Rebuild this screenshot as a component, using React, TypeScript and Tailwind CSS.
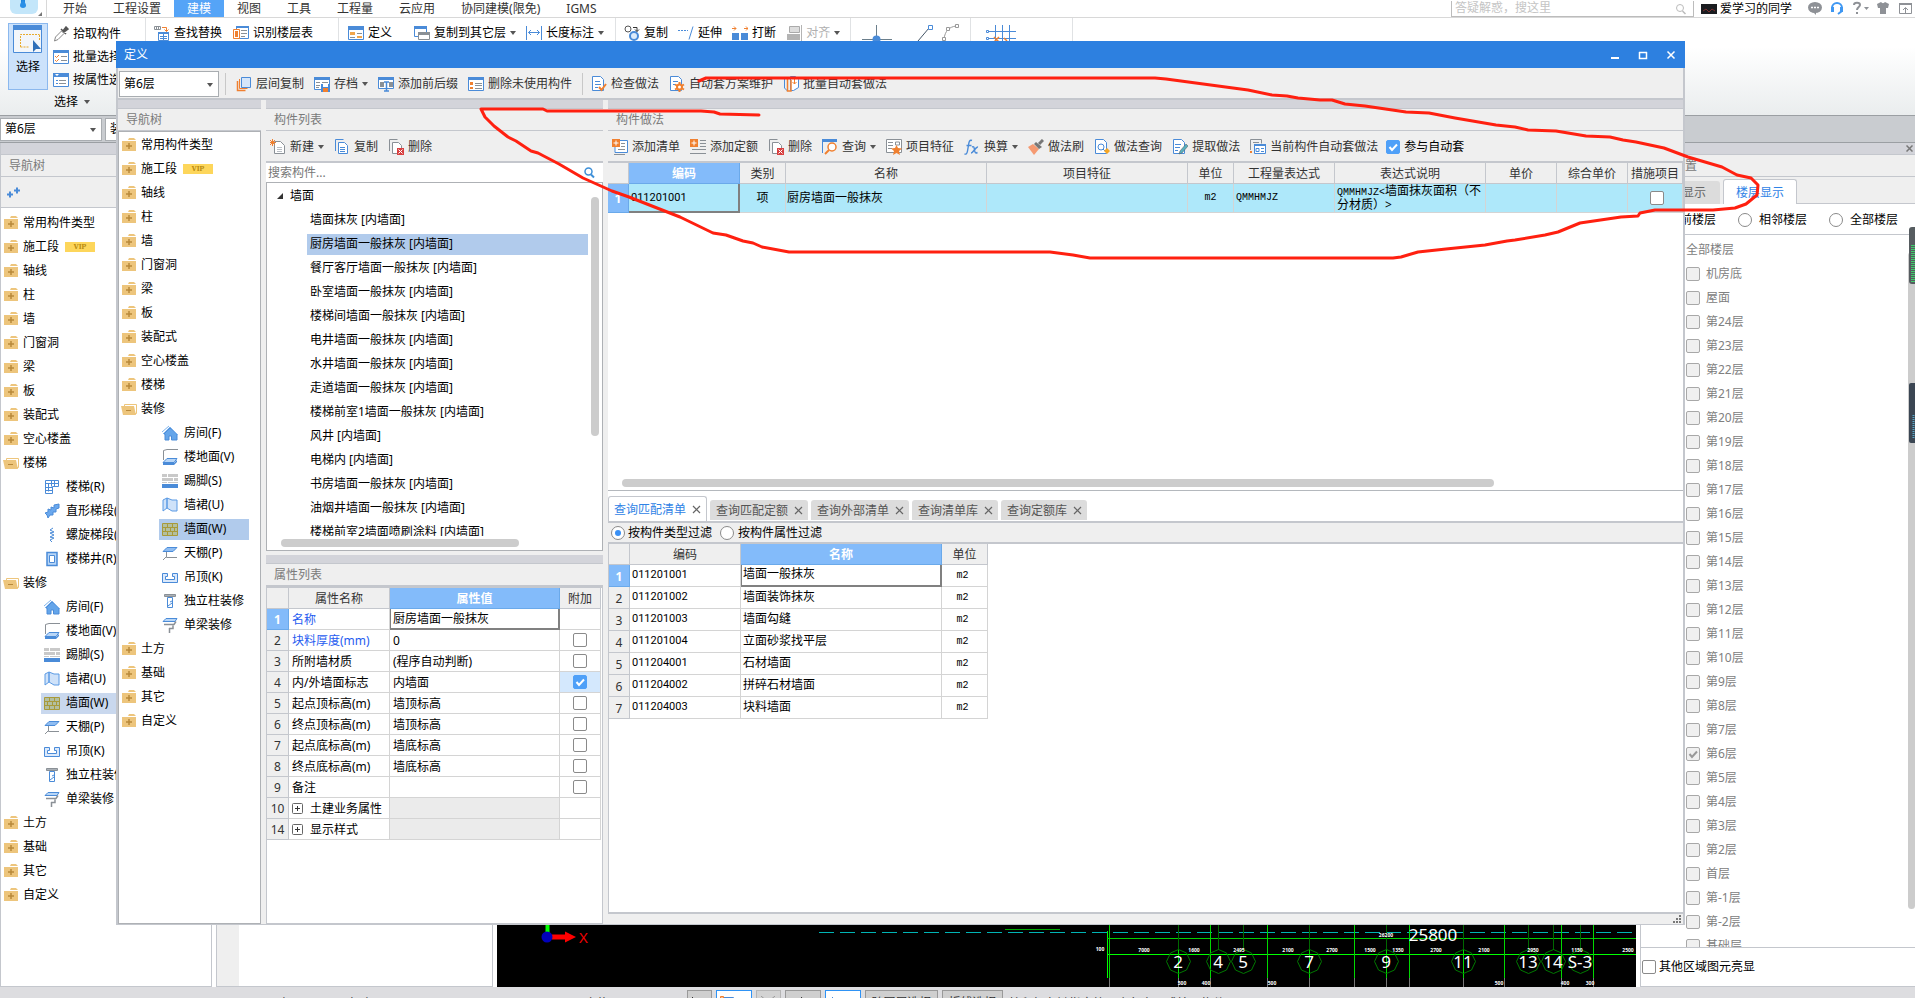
import type { ReactNode } from "react";
import clsx from "clsx";

const B = "#4a8bd8";
const G = "#8a9096";
const O = "#f08030";

const ICONS: Record<string, ReactNode> = {
  dropper: (
    <>
      <path d="M1.500 15l1-4 6-6 2.500 2.500-6 6z" fill="#fff" stroke="#888" />
      <path d="M8 3l5 5M10 5l3-4 2 2-4 3z" stroke="#555" strokeWidth="1.500" fill="#555" />
    </>
  ),
  checklist: (
    <>
      <path d="M.5 1.500h15v13h-15z" fill="#fff" stroke={B} />
      <path d="M0 1h16v3H0z" fill={B} />
      <path d="M2 7l1.500 1.500L6 6M2 11l1.500 1.500L6 10" stroke={O} fill="none" />
      <path d="M8 7.500h6M8 11.500h6" stroke={G} />
    </>
  ),
  proplist: (
    <>
      <path d="M.5 1.500h15v13h-15z" fill="#fff" stroke={B} />
      <path d="M0 1h16v4H0z" fill={B} />
      <path d="M3 8.500h2M3 11.500h2" stroke={B} />
      <path d="M6 8.500h7M6 11.500h7" stroke={G} />
      <path d="M2 2h4L4 4z" fill="#fff" />
    </>
  ),
  replace: (
    <>
      <path d="M.5 1.500h6v3h-6zM2.500 1.500v3M4.500 1.500v3" fill="none" stroke={G} />
      <path d="M8 2.500h4.500v4M10.500 4.500l2 2 2-2" fill="none" stroke={O} />
      <path d="M4.500 7.500h10v8h-10z" fill="#fff" stroke={B} />
      <path d="M4 7h11v2H4z" fill={B} />
      <path d="M6 11.500h7M6 13.500h7M9.500 9v6" stroke={B} />
    </>
  ),
  floors: (
    <>
      <path d="M3.500 1.500h12v12h-12z" fill="#fff" stroke={B} />
      <path d="M3 1h13v2H3z" fill={B} />
      <path d="M.5 4.500h6v9h-6z" fill="#fff" stroke={O} />
      <path d="M2 6h3v6H2z" fill={O} />
      <path d="M8 5.500h6M8 8.500h6M8 11.500h4" stroke={G} />
    </>
  ),
  define: (
    <>
      <path d="M.5 1.500h15v13h-15z" fill="#fff" stroke={B} />
      <path d="M0 1h16v4H0z" fill={B} />
      <path d="M2 7h5v3H2zM9 11h5v2H9z" fill="#f3a64a" />
      <path d="M9 8.500h5M2 12.500h5" stroke={G} />
    </>
  ),
  layers: (
    <>
      <path d="M.5 1.500h12v10H.5z" fill="#fff" stroke={B} />
      <path d="M0 1h13v3H0z" fill={B} />
      <path d="M4.500 7.500h11v7h-11z" fill="#fff" stroke={G} />
      <path d="M4 7h12v3H4z" fill={G} />
    </>
  ),
  measure: <path d="M.5 1v14M15.500 1v14M2.500 7.500h11M5 5L2.500 7.500 5 10M11 5l2.500 2.500L11 10" fill="none" stroke={B} />,
  copyball: (
    <>
      <circle cx="4" cy="4" r="3" fill="none" stroke="#555" />
      <circle cx="10" cy="11" r="4" fill="#dcebfb" stroke={B} strokeWidth="2" />
      <path d="M9 2.500h4v4M11 4.500l2 2 2-2" fill="none" stroke="#333" />
    </>
  ),
  extend: (
    <>
      <path d="M0 5.500h10" stroke={B} strokeDasharray="2 1" />
      <path d="M11 14.500l4-13" stroke={B} />
    </>
  ),
  breakup: (
    <>
      <path d="M0 8h7v7H0zM9 8h7v7H9z" fill={B} />
      <path d="M0 3.500h4M2 1.500l2 2-2 2M12 3.500h4M14 1.500l2 2-2 2" stroke={O} fill="none" />
    </>
  ),
  align: (
    <>
      <path d="M3.500 1.500h10v6h-10z" fill="#ddd" stroke="#aaa" />
      <path d="M1 9h13v6H1z" fill="#b4b4b4" />
      <path d="M15.500 0v16" stroke="#b4b4b4" />
    </>
  ),
  bluecopy: (
    <>
      <path d="M1.500 5v9.500h8" fill="none" stroke={O} strokeWidth="1.500" />
      <path d="M3.500 3v9.500h8" fill="none" stroke={O} />
      <path d="M5.500 1.500h9v10h-9z" fill="#d5e6fa" stroke={B} />
    </>
  ),
  archive: (
    <>
      <path d="M.5 1.500h15v12H.5z" fill="#fff" stroke={B} />
      <path d="M0 1h16v3H0z" fill={B} />
      <path d="M2 6.500h4M2 9.500h4M2 11.500h3M8 6.500h6" stroke={G} />
      <path d="M7 8h9v8H7z" fill={B} />
      <path d="M9 8h5v3H9z" fill="#fff" />
      <path d="M9 12h5v4H9z" fill={O} />
    </>
  ),
  affix: (
    <>
      <path d="M.5 1.500h15v11H.5z" fill="#fff" stroke={B} />
      <path d="M0 1h16v3H0z" fill={B} />
      <path d="M2 6h4v5H2zM11 6h4v5h-4z" fill={G} />
      <path d="M6 6h5M8.500 6v9M6 15h5" stroke={B} strokeWidth="1.500" />
    </>
  ),
  listred: (
    <>
      <path d="M.5 1.500h15v13H.5z" fill="#fff" stroke={B} />
      <path d="M0 1h16v3H0z" fill={B} />
      <path d="M2 6h3v3H2zM2 11h3v2H2z" fill={O} />
      <path d="M7 7.500h7M7 9.500h7M7 12.500h7" stroke={G} />
    </>
  ),
  docCheck: (
    <>
      <path d="M1.500.5h8l3 3v11h-11z" fill="#fff" stroke={B} />
      <path d="M4 5.500h5M4 8.500h6M4 11.500h3" stroke={B} />
      <path d="M8 11l2.500 3L15 8" fill="none" stroke={O} strokeWidth="2" />
    </>
  ),
  docGear: (
    <>
      <path d="M1.500.5h8l3 3v11h-11z" fill="#fff" stroke={B} />
      <path d="M4 5.500h5M4 8.500h3" stroke={B} />
      <path d="M10.500 6v10M6 8.500l9 5M6 13.500l9-5" stroke={O} strokeWidth="2" />
      <circle cx="10.500" cy="11" r="2.500" fill="#fff" stroke={O} strokeWidth="2" />
    </>
  ),
  batch: (
    <>
      <path d="M1 1.500h4M1.500 1v11l3 3" fill="none" stroke={B} />
      <path d="M7.500.5h5l3 3v8l-5 3h-3z" fill="#fff" stroke={B} />
      <path d="M4.500 1v14H8V4" fill="none" stroke={O} strokeWidth="1.500" />
      <path d="M11.500 3v5M9.500 6l2 2 2-2" stroke={O} fill="none" />
    </>
  ),
  newdoc: (
    <>
      <path d="M4.500 2.500h6l4 4v8h-10z" fill="#fff" stroke={G} />
      <path d="M7 8.500h5M7 10.500h5M7 12.500h5" stroke="#b9bec4" />
      <path d="M0 1l5 5M5 1L0 6M2.500 0v7M0 3.500h6" stroke={O} />
    </>
  ),
  copy: (
    <>
      <path d="M1.500 12V.5h8" fill="none" stroke={B} />
      <path d="M4.500 3.500h6l3 3v8h-9z" fill="#fff" stroke={B} />
      <path d="M6 8.500h5M6 10.500h5M6 12.500h5" stroke={B} />
    </>
  ),
  remove: (
    <>
      <path d="M1.500 12V.5h8" fill="none" stroke={G} />
      <path d="M4.500 3.500h6l3 3v8h-9z" fill="#fff" stroke={G} />
      <path d="M9 9h7v7H9z" fill="#d84040" />
      <path d="M10.500 10.500l4 4M14.500 10.500l-4 4" stroke="#fff" />
    </>
  ),
  addlist: (
    <>
      <path d="M5 1.500h10.500v12H3V7" fill="#fff" stroke={B} />
      <path d="M2 15.500h11M9 4.500h4M9 7.500h4M6 10.500h7" stroke={G} />
      <path d="M0 0h8v8H0z" fill={O} />
      <path d="M4 1.500v5M1.500 4h5" stroke="#fff" />
    </>
  ),
  addquota: (
    <>
      <path d="M10 1.500h6M10 4.500h6M10 7.500h6M2 10.500h14M0 14.500h16" stroke={G} />
      <path d="M0 0h8v8H0z" fill={O} />
      <path d="M4 1.500v5M1.500 4h5" stroke="#fff" />
    </>
  ),
  query: (
    <>
      <path d="M.5 14V1.500h14" fill="none" stroke={B} />
      <path d="M0 0h15v3H0z" fill={B} />
      <circle cx="10" cy="8" r="4" fill="#fff" stroke={O} strokeWidth="1.500" />
      <path d="M7 11l-4 4" stroke={O} strokeWidth="2" />
    </>
  ),
  feature: (
    <>
      <path d="M.5.5h15v13H.5z" fill="#fff" stroke={G} />
      <path d="M2 3.500h5M2 6.500h5M2 9.500h4M9.500 3h4v3h-4z" stroke={G} fill="none" />
      <path d="M10.500 6l1.500 3 4 .5-3 2.500 1 4-3.500-2L7 16l1-4-3-2.500 4-.5z" fill={O} />
    </>
  ),
  fx: (
    <path
      d="M8 1.500C5.500.5 5 3 4.700 5L3.500 12c-.5 3-1.500 3.500-3 3M2.500 6.500h5M8 8c2-1 2 0 2.500 3s1 3.500 3 2.500M14 8c-2-.5-5 6-7 6"
      fill="none"
      stroke={B}
      strokeWidth="1.400"
    />
  ),
  brush: (
    <>
      <path d="M0 8l5-3 6 5-5 6z" fill="#f59a72" />
      <path d="M6 5l2-2 6 5-3 2z" fill="#777" />
      <path d="M11 5l4-4" stroke="#777" strokeWidth="3" />
    </>
  ),
  docFind: (
    <>
      <path d="M1.500.5h8l3 3v11h-11z" fill="#fff" stroke={B} />
      <circle cx="7" cy="8" r="3" fill="#fff" stroke={B} />
      <path d="M9 10l3 3" stroke={B} />
      <path d="M13 9l3 3-3 3-3-3z" fill="#f5a623" />
    </>
  ),
  docPen: (
    <>
      <path d="M1.500.5h8l3 3v11h-11z" fill="#fff" stroke={B} />
      <path d="M3 5.500h6M3 8.500h5M3 11.500h3" stroke={B} />
      <path d="M7 15l1-3 6-7 2 2-6 7z" fill="#58b0c0" stroke="#555" strokeWidth=".5" />
    </>
  ),
  current: (
    <>
      <path d="M.5 11V.5h11v4M3 3.500h6" fill="none" stroke={G} />
      <path d="M4.500 5.500h11v9h-11z" fill="#fff" stroke={B} />
      <path d="M4 5h12v2H4z" fill={B} />
      <path d="M6 9.500h3v3H6zM11 9.500h3M11 12.500h3" fill="none" stroke={B} />
      <path d="M0 13h2" stroke={O} strokeWidth="2" />
    </>
  ),
  house: (
    <>
      <path d="M2 9l6-6 7 6v6H9.500v-4H7v4H3V9z" fill="#64a5ea" stroke={B} />
      <path d="M0 7l7-6M1 9l7-7 8 8" fill="none" stroke="#7fb3ec" />
    </>
  ),
  slab: (
    <>
      <path d="M1.500 11V1.500L5 .5h11" fill="none" stroke={G} />
      <path d="M1 13.500l4-4h10l-3 4z" fill="#b8d6f7" stroke={B} />
      <path d="M1 14h11l3-3v2l-3 3H1z" fill={B} />
    </>
  ),
  skirt: (
    <>
      <path d="M0 1h16v9H0z" fill="#c9c9c9" />
      <path d="M0 4.500h16M0 8.500h16M5.500 1v3M11.500 5v3M5.500 9v2" stroke="#fff" />
      <path d="M0 11h16v4H0z" fill={B} />
    </>
  ),
  dado: <path d="M1 3l4-2v10l-4 3zM5 1l5 2h5v11h-5l-5-3z" fill="#cfe2f9" stroke="#5b9ae4" strokeLinejoin="round" />,
  brick: (
    <path
      d="M.5 2.500h15v12H.5zM.5 6.500h15M.5 10.500h15M5.500 2.500v4M10.500 2.500v4M3.500 6.500v4M8.500 6.500v4M12.500 6.500v4M5.500 10.500v4M10.500 10.500v4"
      fill="#b3bfa0"
      stroke="#a89a3a"
    />
  ),
  ceiling: (
    <>
      <path d="M1 6.500l4-4h10l-4 4z" fill="#8fbdf2" stroke={B} />
      <path d="M4.500 7v5.500H15M4 12l-3 3" fill="none" stroke={G} />
    </>
  ),
  hung: <path d="M.5 4.500h5v3h-2v3h9v-3h-2v-3h5v9H.5z" fill="#dbe9fb" stroke={B} />,
  column: (
    <>
      <path d="M2.500 1.500h11v2h-11z" fill="#aab0b6" stroke={G} />
      <path d="M5.500 4.500h5v10h-5z" fill="#fff" stroke={B} />
      <path d="M6 13l4-3M8 9l2-1" stroke={B} />
    </>
  ),
  beam: (
    <>
      <path d="M1 4.500l3-3h11l-2 3z" fill="#b8d6f7" stroke={B} />
      <path d="M2 7.500h10l2-3M7 11.500h4v-3M7.500 11v5" fill="none" stroke={G} strokeWidth="1.500" />
    </>
  ),
  stairs: (
    <>
      <path d="M1.500 1.500h13v6h-6v7h-7z" fill="none" stroke={B} />
      <path d="M4.500 4.500v8M7.500 1.500v6M10.500 1.500v6M1.500 4.500h13M1.500 8.500h7M1.500 11.500h7" stroke={B} fill="none" />
    </>
  ),
  flight: <path d="M1 10l3-1V6l3 1V4l3 1V2l5-1v4l-3 1v3H9v3H6l-2 3-1-3z" fill="#6aa8ee" stroke={B} />,
  spiral: <path d="M9 1L6 3l4 2-4 1 4 2-4 2 4 1-4 2 2 2" fill="none" stroke={B} />,
  shaft: (
    <>
      <path d="M3 1.500h10v13H3z" fill="#b8d6f7" stroke={B} strokeWidth="1.500" />
      <path d="M5.500 4.500h5v7h-5z" fill="#fff" stroke={B} />
    </>
  ),
};

function Icon({ name, className }: { name: string; className?: string }) {
  return (
    <svg viewBox="0 0 16 16" className={clsx("h-4 w-4 shrink-0", className)} aria-hidden="true">
      {ICONS[name]}
    </svg>
  );
}

function Caret({ className }: { className?: string }) {
  return (
    <svg viewBox="0 0 6 4" className={clsx("h-1 w-1.5 shrink-0", className)} aria-hidden="true">
      <path d="M0 0h6L3 4z" fill="currentColor" />
    </svg>
  );
}

function Folder({ open }: { open?: boolean }) {
  return (
    <svg viewBox="0 0 16 14" className="h-3.5 w-4 shrink-0" aria-hidden="true">
      {open ? (
        <>
          <path d="M3.500 2.500h12v9h-12z" fill="#fff" stroke="#edc57c" />
          <path d="M0 4h13l2 9H2z" fill="#edc57c" />
          <path d="M5 8.500h5" stroke="#b8893a" />
        </>
      ) : (
        <>
          <path d="M8 0h5l2 2H7zM1 3h14v10H1z" fill="#edc57c" />
          <path d="M5 8h6M8 5v6" stroke="#b8893a" strokeWidth="1.500" />
        </>
      )}
    </svg>
  );
}

function ToolButton({ icon, label, caret, className }: { icon: string; label: string; caret?: boolean; className?: string }) {
  return (
    <button type="button" className={clsx("flex shrink-0 items-center gap-1 whitespace-nowrap", className)}>
      <Icon name={icon} />
      {label}
      {caret && <Caret className="text-[#555]" />}
    </button>
  );
}

function Combo({ id, label, value, className }: { id: string; label: string; value: string; className?: string }) {
  return (
    <div className={clsx("relative shrink-0", className)}>
      <label htmlFor={id} className="sr-only">
        {label}
      </label>
      <select id={id} className="h-full w-full appearance-none border border-[#a9adb1] bg-white px-1 text-black">
        <option>{value}</option>
      </select>
      <Caret className="absolute top-1/2 right-[6px] -mt-px text-[#555]" />
    </div>
  );
}

function Tick({ label, checked, disabled }: { label: string; checked?: boolean; disabled?: boolean }) {
  return (
    <span className="relative inline-block h-3.5 w-3.5 shrink-0 align-middle">
      <input
        type="checkbox"
        aria-label={label}
        defaultChecked={checked}
        disabled={disabled}
        className={clsx(
          "block h-3.5 w-3.5 appearance-none rounded-[2px] border",
          disabled ? "border-[#a8a8a8] bg-[#f0f0f0]" : checked ? "border-[#4fa0f8] bg-[#4fa0f8]" : "border-[#8a8a8a] bg-white",
        )}
      />
      {checked && (
        <svg viewBox="0 0 14 14" className="pointer-events-none absolute inset-0" aria-hidden="true">
          <path d="M3.500 7l2.500 3 5-5.500" fill="none" stroke={disabled ? "#999" : "#fff"} strokeWidth="2" />
        </svg>
      )}
    </span>
  );
}

function Radio({ name, label, checked, className }: { name: string; label: string; checked?: boolean; className?: string }) {
  return (
    <label className={clsx("flex shrink-0 items-center whitespace-nowrap", className)}>
      <span className="relative grid h-3.5 w-3.5 place-items-center">
        <input
          type="radio"
          name={name}
          defaultChecked={checked}
          className="peer h-3.5 w-3.5 appearance-none rounded-full border border-[#8a8a8a] bg-white"
        />
        <span className="absolute hidden h-1.5 w-1.5 rounded-full bg-[#3a90f5] peer-checked:block" />
      </span>
      {label}
    </label>
  );
}

type Node = { label: string; icon?: string; open?: boolean; vip?: boolean; selected?: boolean };

const BASE: Node[] = [
  { label: "常用构件类型" },
  { label: "施工段", vip: true },
  { label: "轴线" },
  { label: "柱" },
  { label: "墙" },
  { label: "门窗洞" },
  { label: "梁" },
  { label: "板" },
  { label: "装配式" },
  { label: "空心楼盖" },
];
const FINISH: Node[] = [
  { label: "装修", open: true },
  { label: "房间(F)", icon: "house" },
  { label: "楼地面(V)", icon: "slab" },
  { label: "踢脚(S)", icon: "skirt" },
  { label: "墙裙(U)", icon: "dado" },
  { label: "墙面(W)", icon: "brick", selected: true },
  { label: "天棚(P)", icon: "ceiling" },
  { label: "吊顶(K)", icon: "hung" },
  { label: "独立柱装修", icon: "column" },
  { label: "单梁装修", icon: "beam" },
  { label: "土方" },
  { label: "基础" },
  { label: "其它" },
  { label: "自定义" },
];
const STAIRS: Node[] = [
  { label: "楼梯", open: true },
  { label: "楼梯(R)", icon: "stairs" },
  { label: "直形梯段(R)", icon: "flight" },
  { label: "螺旋梯段(R)", icon: "spiral" },
  { label: "楼梯井(R)", icon: "shaft" },
];

function NavTree({ nodes, active }: { nodes: Node[]; active?: boolean }) {
  return (
    <ul className="text-black">
      {nodes.map((n) => (
        <li key={n.label} className={clsx("flex h-6 items-center whitespace-nowrap", n.icon ? "pl-10" : "pl-0.5")}>
          {n.icon ? (
            <span
              className={clsx(
                "flex h-[21px] w-[90px] items-center gap-1.5 pl-[3px]",
                n.selected && (active ? "bg-[#b1cbec]" : "bg-[#c9d8ee]"),
              )}
            >
              <Icon name={n.icon} />
              {n.label}
            </span>
          ) : (
            <span className="flex items-center gap-1">
              <Folder open={n.open} />
              {n.label}
              {n.vip && (
                <span className="ml-0.5 w-[30px] bg-[#fdd65b] text-center font-serif text-[8px] leading-[10px] font-bold text-[#b88a10]">
                  VIP
                </span>
              )}
            </span>
          )}
        </li>
      ))}
    </ul>
  );
}

function PanelHead({ title }: { title: string }) {
  return (
    <>
      <div className="h-[9px] shrink-0 border-b border-[#c4c7cd] bg-[#d3d4da]" />
      <h2 className="flex h-[22px] shrink-0 items-center border-b border-[#c4c7cd] bg-[#efefef] pt-px pl-2 text-[#7a7a7a]">{title}</h2>
    </>
  );
}

const TABS = ["开始", "工程设置", "建模", "视图", "工具", "工程量", "云应用", "协同建模(限免)", "IGMS"];

function TopBar() {
  return (
    <header className="flex h-[18px] shrink-0 border-b border-[#d8d8d8] bg-white text-[#333]">
      <div className="relative mr-[3px] w-[47px] border-r border-[#d8d8d8]">
        <svg viewBox="0 0 46 17" className="h-[17px] w-[46px]" aria-hidden="true">
          <rect x="10" y="-12" width="28" height="26" rx="6" fill="#c3e6fa" />
          <path d="M23 -4v8" stroke="#1f86dd" strokeWidth="4" />
          <path d="M23 0c4 4 4 8 0 8s-4-4 0-8z" fill="#2a8fe6" />
          <path d="M42 12v4h-4z" fill="#777" />
        </svg>
      </div>
      <nav className="flex">
        {TABS.map((t) => (
          <a key={t} href="#" className={clsx("flex items-center px-[13px] leading-4", t === "建模" && "bg-[#55a4f7] text-white")}>
            {t}
          </a>
        ))}
      </nav>
      <div className="ml-auto flex items-center">
        <div className="relative h-4 w-[243px] border border-t-0 border-[#bcbcbc]">
          <input
            aria-label="搜索"
            placeholder="答疑解惑，搜这里"
            className="block h-[15px] w-full px-[3px] placeholder:text-[#c4c4c4]"
          />
          <svg viewBox="0 0 12 12" className="absolute top-[2px] right-[6px] h-3 w-3" aria-hidden="true">
            <circle cx="5" cy="5" r="3.500" fill="none" stroke="#bbb" />
            <path d="M7.500 8l3 3" stroke="#bbb" strokeWidth="1.500" />
          </svg>
        </div>
        <svg viewBox="0 0 16 10" className="ml-[7px] h-[10px] w-4" aria-hidden="true">
          <path d="M0 0h16v10H0z" fill="#1a1c20" />
          <path d="M2 7l3-2 3 3 3-3 3 2" stroke="#7a3030" fill="none" />
        </svg>
        <span className="ml-[3px] w-[87px] whitespace-nowrap text-black">爱学习的同学</span>
        <svg viewBox="0 0 108 15" className="h-[15px] w-[108px]" aria-hidden="true">
          <ellipse cx="8" cy="6.500" rx="7" ry="5.500" fill="#8e9196" />
          <path d="M6 11l3 3v-3z" fill="#8e9196" />
          <path d="M4 6.500h2M7 6.500h2M10 6.500h2" stroke="#fff" strokeWidth="1.500" />
          <path d="M25 7a5 5 0 0 1 10 0v3l-4 3" fill="none" stroke="#3f97f2" strokeWidth="2" />
          <path d="M24 6h3v5h-3zM33 6h3v5h-3z" fill="#3f97f2" />
          <path d="M47 4c0-3 6-3 6 0 0 2-3 2-3 5M50 11v2" fill="none" stroke="#8e9196" strokeWidth="2" />
          <path d="M57 6h5l-2.500 3z" fill="#8e9196" />
          <path d="M70 3l4-2c1 1.500 3 1.500 4 0l4 2-1 4h-2v6h-6V7h-2z" fill="#8e9196" />
          <path d="M92.500 2.500h12v10h-12z" fill="none" stroke="#8e9196" />
          <path d="M92 2h13v2H92z" fill="#8e9196" />
          <path d="M98.500 12V7M96 9l2.500-2.500L101 9" stroke="#8e9196" fill="none" />
        </svg>
      </div>
    </header>
  );
}

function Ribbon() {
  return (
    <div className="flex h-[98px] shrink-0 border-b border-[#9b9fa3] bg-linear-to-b from-white from-30% to-[#eaedee] pl-2 text-black">
      <div className="w-[137px] pt-[5px]">
        <div className="flex gap-[5px]">
          <button type="button" className="flex h-[67px] w-10 flex-col items-center gap-1.5 border border-[#8bb8ee] bg-[#cce2fb] pt-px">
            <svg viewBox="0 0 30 28" className="h-7 w-[30px]" aria-hidden="true">
              <path d="M.5.5h28v27H.5z" fill="#f3f6fa" stroke={B} />
              <path d="M0 0h29v5H0z" fill={B} />
              <path d="M7.500 22V9.500h19M7.500 22h9M26.500 10v6" fill="none" stroke="#e8ab2c" strokeDasharray="2 1" />
              <path d="M20 15v12l3-3h5z" fill="#2f6fb8" />
            </svg>
            选择
          </button>
          <div className="flex flex-col items-start gap-[7px] pt-[3px]">
            <ToolButton icon="dropper" label="拾取构件" className="h-4" />
            <ToolButton icon="checklist" label="批量选择" className="h-4" />
            <ToolButton icon="proplist" label="按属性选择" className="h-4" />
          </div>
        </div>
        <div className="flex items-center gap-1.5 pt-1 pl-[46px]">
          选择
          <Caret className="text-[#555]" />
        </div>
      </div>
      <div className="flex h-[75px] items-start gap-[11px] border-l border-[#e0e2e4] pt-[7px] pl-2">
        <ToolButton icon="replace" label="查找替换" className="h-4" />
        <ToolButton icon="floors" label="识别楼层表" className="h-4" />
      </div>
      <div className="ml-[25px] flex h-[75px] items-start gap-[22px] border-l border-[#e0e2e4] pt-[7px] pl-[9px]">
        <ToolButton icon="define" label="定义" className="h-4" />
        <div className="flex gap-[10px]">
          <ToolButton icon="layers" label="复制到其它层" caret className="h-4" />
          <ToolButton icon="measure" label="长度标注" caret className="h-4" />
        </div>
      </div>
      <div className="ml-[11px] flex h-[75px] items-start gap-[10px] border-l border-[#e0e2e4] pt-[7px] pl-2">
        <ToolButton icon="copyball" label="复制" className="h-4" />
        <ToolButton icon="extend" label="延伸" className="h-4" />
        <ToolButton icon="breakup" label="打断" className="h-4" />
        <ToolButton icon="align" label="对齐" caret className="h-4 text-[#b0b0b0]" />
      </div>
      <svg viewBox="0 0 224 75" className="ml-[10px] h-[75px] w-[224px]" aria-hidden="true">
        <path d="M.5 0v75M120.500 0v75M222.500 0v75" stroke="#e0e2e4" />
        <path d="M26.500 7v34M12 21.500h30" stroke="#6b7f8c" />
        <circle cx="26.500" cy="21.500" r="4" fill={B} />
        <path d="M68 23l11-13" stroke="#456" />
        <path d="M78.500 7.500h4v4h-4z" fill="#fff" stroke={B} />
        <path d="M94 21c1-8 5-12 12-13" fill="none" stroke="#999" />
        <path d="M92.500 19.500h3v3h-3zM96.500 9.500h3v3h-3zM105.500 6.500h3v3h-3z" fill="#fff" stroke="#999" />
        <path d="M137 13.500h29M137 20.500h29M145.500 7v16M152.500 7v16M159.500 7v16" stroke={B} />
        <path d="M136.500 12.500h2v2h-2zM136.500 19.500h2v2h-2z" fill="#fff" stroke={B} />
        <path d="M144 19l5 5M149 19l-5 5M154 20l3 3" stroke={O} strokeWidth="1.500" />
      </svg>
    </div>
  );
}

const FLOORS = ["机房底", "屋面", ...Array.from({ length: 23 }, (_, i) => `第${24 - i}层`), "首层", "第-1层", "第-2层", "基础层"];

function FloorPanel() {
  return (
    <aside className="relative flex w-[275px] shrink-0 flex-col border-b border-l border-[#c4c7cd] bg-white">
      <div className="flex h-3 shrink-0 items-center justify-end border-b border-[#c4c7cd] bg-[#d3d4da] pr-0.5">
        <button type="button" aria-label="关闭面板" className="h-[7px] w-[7px]">
          <svg viewBox="0 0 7 7">
            <path d="M.5.5l6 6M6.500.5l-6 6" stroke="#777" strokeWidth="1.500" />
          </svg>
        </button>
      </div>
      <h2 className="flex h-[22px] shrink-0 items-center border-b border-[#c4c7cd] bg-[#efefef] pt-px pl-2 text-[#7a7a7a]">显示设置</h2>
      <div className="flex h-[27px] shrink-0 items-end bg-[#efefef]">
        <button type="button" className="h-[23px] w-[79px] rounded-t-[3px] bg-[#dcdcdc] pr-[14px] text-right text-[#666]">
          图元显示
        </button>
        <button type="button" className="ml-[3px] h-[25px] w-[74px] rounded-t-[3px] border border-b-0 border-[#c4c7cd] bg-white pt-px text-[#2f83e6]">
          楼层显示
        </button>
        <div className="flex-1 self-stretch border-b border-[#c4c7cd]" />
      </div>
      <div className="flex h-[31px] shrink-0 items-center justify-end gap-[22px] border-b border-[#c4c7cd] pt-px pr-[17px] text-black">
        <Radio name="floor" label="当前楼层" className="gap-[7px]" />
        <Radio name="floor" label="相邻楼层" className="gap-[7px]" />
        <Radio name="floor" label="全部楼层" className="gap-[7px]" />
      </div>
      <div className="min-h-0 flex-1 overflow-hidden pt-[3px] pl-[45px] text-[#808080]">
        <div className="flex h-6 items-center">全部楼层</div>
        {FLOORS.map((f) => (
          <label key={f} className="flex h-6 items-center gap-1.5">
            <Tick label={f} disabled checked={f === "第6层"} />
            {f}
          </label>
        ))}
      </div>
      <label className="flex h-[39px] shrink-0 items-center gap-[3px] border-t border-[#c4c7cd] pl-px text-black">
        <Tick label="其他区域图元亮显" />
        其他区域图元亮显
      </label>
      <div className="absolute top-[109px] right-0 h-[657px] w-[7px] rounded bg-[#ccc]" />
      <svg viewBox="0 0 6 216" className="absolute top-[84px] right-0 h-[216px] w-1.5" aria-hidden="true">
        <rect width="12" height="57" rx="3" fill="#565c60" />
        <path d="M4 18v38" stroke="#3fce6c" strokeWidth="4" strokeDasharray="1 1" />
        <rect y="156" width="12" height="60" rx="2" fill="#3b4653" />
        <path d="M4.500 188v24" stroke="#58a7c8" strokeWidth="2" strokeDasharray="1 1" />
      </svg>
    </aside>
  );
}

const AXES: [number, string][] = [
  [1178, "2"],
  [1218, "4"],
  [1243, "5"],
  [1309, "7"],
  [1386, "9"],
  [1463, "11"],
  [1528, "13"],
  [1553, "14"],
  [1580, "S-3"],
];
const SPANS: [number, string][] = [
  [1144, "7000"],
  [1194, "1600"],
  [1239, "2495"],
  [1288, "2100"],
  [1332, "2700"],
  [1370, "1500"],
  [1398, "1350"],
  [1436, "2700"],
  [1484, "2100"],
  [1533, "2950"],
  [1577, "1150"],
  [1628, "2500"],
];
const OFFSETS: [number, string][] = [
  [1182, "500"],
  [1206, "400"],
  [1272, "500"],
  [1499, "500"],
  [1565, "400"],
  [1590, "300"],
];
const GRID_X = [1109, 1178, 1210, 1267, 1309, 1354, 1386, 1409, 1463, 1504, 1561, 1593];

function DrawingCanvas() {
  return (
    <div className="mr-0 flex min-w-0 flex-1 items-end overflow-hidden bg-black">
      <svg viewBox="497 925 1139 62" className="h-[62px] w-[1139px] shrink-0 font-['Noto_Sans']">
        <path d="M547.500 920v14" stroke="#0f0" strokeWidth="4" />
        <path d="M552 937h14" stroke="red" strokeWidth="5" />
        <path d="M565 931.500v11l11-5.500z" fill="red" />
        <circle cx="547" cy="937" r="5.500" fill="#00b" />
        <text x="579" y="943" fontSize="15" fill="#e00">X</text>
        <path d="M819 932.500h817" stroke="#00b4b4" strokeDasharray="15 6" />
        <path d="M1005 929.500h55" stroke="#00a800" />
        <path d="M1107.500 931v47" stroke="#0f0" />
        <path d="M1107 938.500h529" stroke="#00d000" />
        <path d="M1107 954.500h529" stroke="#0f0" />
        {GRID_X.map((x) => (
          <g key={x}>
            <path d={`M${x + 0.5} 925v53`} stroke="#00d800" />
            <path d={`M${x + 0.5} 978v9`} stroke="#777" />
          </g>
        ))}
        {AXES.map(([x, t]) => (
          <g key={t}>
            <path d={`M${x + 0.5} 925v25`} stroke="#006800" />
            <path d={`M${x + 0.5} 949.500l8 3.500 4 8.500-4 8.500-8 3.500-8-3.500-4-8.500 4-8.500z`} fill="none" stroke="#007800" />
            <text x={x} y="968" fontSize="17" textAnchor="middle" fill="#fff">{t}</text>
          </g>
        ))}
        <text x="1433" y="941" fontSize="17" textAnchor="middle" fill="#fff">25800</text>
        <g fontSize="5" fontWeight="bold" textAnchor="middle" fill="#fff">
          <text x="1386" y="937">26200</text>
          <text x="1100" y="951">100</text>
          {SPANS.map(([x, t]) => (
            <text key={x} x={x} y="952">{t}</text>
          ))}
          {OFFSETS.map(([x, t]) => (
            <text key={x} x={x} y="985">{t}</text>
          ))}
        </g>
      </svg>
    </div>
  );
}

function StatusBar() {
  return (
    <footer className="relative flex h-[11px] shrink-0 items-start overflow-hidden bg-[#dddde0] pt-[3px] pl-[266px] text-[#333]">
      <span className="w-[83px] pt-1.5">层高: 3</span>
      <span className="w-[235px] pt-1.5">标高: 15</span>
      <span className="w-[103px] pt-1.5">隐藏</span>
      <div className="flex gap-1">
        <button type="button" aria-label="正交" className="h-5 w-[25px] border border-[#999] bg-[#cfcfcf] pt-1.5 pl-1">
          <svg viewBox="0 0 12 12" className="h-3 w-3" aria-hidden="true">
            <path d="M.5 0v10h10" fill="none" stroke="#333" />
          </svg>
        </button>
        <button type="button" aria-label="捕捉" className="h-5 w-9 border border-[#2f93f5] bg-white pt-1 pl-[3px]">
          <svg viewBox="0 0 16 12" className="h-3 w-4" aria-hidden="true">
            <path d="M3.500 1.500h10v9" fill="none" stroke={B} />
            <path d="M.5.5h3v9h-3z" fill="#f7b98a" stroke={O} />
          </svg>
        </button>
        <button type="button" aria-label="相交" className="h-5 w-[25px] border border-[#b5b5b5] bg-[#d3d3d3] pt-1 pl-[3px]">
          <svg viewBox="0 0 16 12" className="h-3 w-4" aria-hidden="true">
            <path d="M1 0l14 12M15 0L1 12" stroke="#999" />
          </svg>
        </button>
        <button type="button" aria-label="垂足" className="h-5 w-9 border border-[#999] bg-[#cfcfcf] pt-1.5 pl-2">
          <svg viewBox="0 0 12 12" className="h-3 w-3" aria-hidden="true">
            <path d="M8 0L0 9" stroke="#333" />
          </svg>
        </button>
        <button type="button" aria-label="中点" className="h-5 w-9 border border-[#2f93f5] bg-white pt-1.5 pl-1.5">
          <svg viewBox="0 0 12 12" className="h-3 w-3" aria-hidden="true">
            <path d="M.5 0v10h10" fill="none" stroke={B} />
          </svg>
        </button>
        <button type="button" className="h-5 w-[73px] border border-[#999] bg-[#cfcfcf] pt-1">跨图层选择</button>
        <button type="button" className="h-5 w-[61px] border border-[#999] bg-[#cfcfcf] pt-1">折线选择</button>
      </div>
      <span className="pt-1.5 pl-1.5">按鼠标左键指定第一个角点，或拾取构件图元</span>
    </footer>
  );
}

const COMPONENTS = [
  "墙面抹灰 [内墙面]",
  "厨房墙面一般抹灰 [内墙面]",
  "餐厅客厅墙面一般抹灰 [内墙面]",
  "卧室墙面一般抹灰 [内墙面]",
  "楼梯间墙面一般抹灰 [内墙面]",
  "电井墙面一般抹灰 [内墙面]",
  "水井墙面一般抹灰 [内墙面]",
  "走道墙面一般抹灰 [内墙面]",
  "楼梯前室1墙面一般抹灰 [内墙面]",
  "风井 [内墙面]",
  "电梯内 [内墙面]",
  "书房墙面一般抹灰 [内墙面]",
  "油烟井墙面一般抹灰 [内墙面]",
  "楼梯前室2墙面喷刷涂料 [内墙面]",
];

function ComponentList() {
  return (
    <div className="flex h-[369px] shrink-0 flex-col border border-[#aeb1b5] bg-white text-black">
      <div className="flex min-h-0 flex-1 overflow-hidden">
        <div className="min-w-0 flex-1 pr-[3px]">
          <div className="flex h-[25px] items-center gap-[7px] pl-[10px]">
            <svg viewBox="0 0 6 6" className="h-1.5 w-1.5" aria-hidden="true">
              <path d="M6 0v6H0z" fill="#333" />
            </svg>
            墙面
          </div>
          <ul>
            {COMPONENTS.map((c, i) => (
              <li key={c} className="flex h-6 items-center pl-10">
                <span className={clsx("flex h-[21px] flex-1 items-center pl-[3px] whitespace-nowrap", i === 1 && "bg-[#b1cbec]")}>{c}</span>
              </li>
            ))}
          </ul>
        </div>
        <div className="mt-[14px] mr-[3px] h-[239px] w-2 rounded-full bg-[#ccc]" />
      </div>
      <div className="mt-[3px] mb-[3px] ml-[14px] h-2 w-[238px] rounded-full bg-[#ccc]" />
    </div>
  );
}

type Prop = { no: number; name: string; value: string; kind?: "first" | "on" | "group"; blue?: boolean };
const PROPS: Prop[] = [
  { no: 1, name: "名称", value: "厨房墙面一般抹灰", kind: "first", blue: true },
  { no: 2, name: "块料厚度(mm)", value: "0", blue: true },
  { no: 3, name: "所附墙材质", value: "(程序自动判断)" },
  { no: 4, name: "内/外墙面标志", value: "内墙面", kind: "on" },
  { no: 5, name: "起点顶标高(m)", value: "墙顶标高" },
  { no: 6, name: "终点顶标高(m)", value: "墙顶标高" },
  { no: 7, name: "起点底标高(m)", value: "墙底标高" },
  { no: 8, name: "终点底标高(m)", value: "墙底标高" },
  { no: 9, name: "备注", value: "" },
  { no: 10, name: "土建业务属性", value: "", kind: "group" },
  { no: 14, name: "显示样式", value: "", kind: "group" },
];

const TH = "border-r border-b border-[#c4c7cd] bg-[#efefef] px-0 pt-0.5 pb-0 text-center font-normal text-[#333]";
const TH_ON = "border-r border-b border-[#6aa9ea] bg-[#83bbfa] px-0 pt-0.5 pb-0 text-center font-bold text-white";
const TD = "border-r border-b border-[#d4d4d4] p-0 text-black";

function PropertyTable() {
  return (
    <table className="w-[334px] table-fixed border-separate border-spacing-0 whitespace-nowrap">
      <colgroup>
        <col className="w-[22px]" />
        <col className="w-[101px]" />
        <col className="w-[170px]" />
        <col className="w-[41px]" />
      </colgroup>
      <thead>
        <tr className="h-[21px]">
          <th className={TH} />
          <th className={TH}>属性名称</th>
          <th className={TH_ON}>属性值</th>
          <th className={TH}>附加</th>
        </tr>
      </thead>
      <tbody>
        {PROPS.map((p) => (
          <tr key={p.no} className="h-[21px]">
            <th className={p.kind === "first" ? TH_ON : TH}>{p.no}</th>
            <td className={clsx(TD, "pt-px")}>
              <span className={clsx("flex items-center gap-[7px] pl-[3px]", p.blue && "text-[#1f5cf0]")}>
                {p.kind === "group" && (
                  <svg viewBox="0 0 11 11" className="h-[11px] w-[11px]" aria-hidden="true">
                    <rect x=".5" y=".5" width="10" height="10" rx="1" fill="#fff" stroke="#666" />
                    <path d="M3 5.500h5M5.500 3v5" stroke="#333" />
                  </svg>
                )}
                {p.name}
              </span>
            </td>
            <td
              className={clsx(
                "py-0 pt-px pr-0 text-black",
                p.kind === "first"
                  ? "border-r-2 border-b-2 border-l border-[#808080] pl-0.5"
                  : "border-r border-b border-[#d4d4d4] pl-[3px]",
                p.kind === "group" && "bg-[#ebebeb]",
              )}
            >
              {p.value}
            </td>
            <td className={clsx(TD, "text-center leading-none", p.kind === "on" && "bg-[#d4e8fd]")}>
              {p.kind !== "first" && p.kind !== "group" && <Tick label={p.name} checked={p.kind === "on"} />}
            </td>
          </tr>
        ))}
      </tbody>
    </table>
  );
}

const MONO = "font-['Liberation_Mono','Noto_Sans_CJK_SC',monospace] text-[10px]";
const CODE = "font-[Roboto,'Noto_Sans_CJK_SC',sans-serif] text-[11px]";
const METHOD_COLS = ["类别", "名称", "项目特征", "单位", "工程量表达式", "表达式说明", "单价", "综合单价", "措施项目"];

function MethodTable() {
  return (
    <table className="w-full table-fixed border-separate border-spacing-0 whitespace-nowrap">
      <colgroup>
        <col className="w-[21px]" />
        <col className="w-[111px]" />
        <col className="w-[46px]" />
        <col className="w-[201px]" />
        <col className="w-[201px]" />
        <col className="w-[46px]" />
        <col className="w-[101px]" />
        <col className="w-[151px]" />
        <col className="w-[71px]" />
        <col className="w-[71px]" />
        <col />
      </colgroup>
      <thead>
        <tr className="h-[21px]">
          <th className={TH} />
          <th className={TH_ON}>编码</th>
          {METHOD_COLS.map((c) => (
            <th key={c} className={TH}>{c}</th>
          ))}
        </tr>
      </thead>
      <tbody>
        <tr className="h-[29px] bg-[#aee8fa]">
          <th className={TH_ON}>1</th>
          <td className={clsx("border-r-2 border-b-2 border-[#808080] p-0 pl-0.5 text-black", CODE)}>011201001</td>
          <td className={clsx(TD, "text-center")}>项</td>
          <td className={clsx(TD, "pl-px")}>厨房墙面一般抹灰</td>
          <td className={TD} />
          <td className={clsx(TD, "text-center", MONO)}>m2</td>
          <td className={clsx(TD, "pl-0.5", MONO)}>QMMHMJZ</td>
          <td className={clsx(TD, "pl-0.5 leading-3 whitespace-normal")}>
            <span className={MONO}>QMMHMJZ&lt;</span>墙面抹灰面积（不分材质）&gt;
          </td>
          <td className={TD} />
          <td className={TD} />
          <td className={clsx(TD, "pl-1 text-center leading-none")}>
            <Tick label="措施项目" />
          </td>
        </tr>
      </tbody>
    </table>
  );
}

const MATCHES = [
  ["011201001", "墙面一般抹灰"],
  ["011201002", "墙面装饰抹灰"],
  ["011201003", "墙面勾缝"],
  ["011201004", "立面砂浆找平层"],
  ["011204001", "石材墙面"],
  ["011204002", "拼碎石材墙面"],
  ["011204003", "块料墙面"],
];

function MatchTable() {
  return (
    <table className="w-[379px] table-fixed border-separate border-spacing-0 whitespace-nowrap">
      <colgroup>
        <col className="w-[21px]" />
        <col className="w-[111px]" />
        <col className="w-[201px]" />
        <col className="w-[46px]" />
      </colgroup>
      <thead>
        <tr className="h-[21px]">
          <th className={TH} />
          <th className={TH}>编码</th>
          <th className={TH_ON}>名称</th>
          <th className={TH}>单位</th>
        </tr>
      </thead>
      <tbody>
        {MATCHES.map(([code, name], i) => (
          <tr key={code} className="h-[22px]">
            <th className={i === 0 ? TH_ON : TH}>{i + 1}</th>
            <td className={clsx(TD, "pb-0.5 pl-0.5", CODE)}>{code}</td>
            <td
              className={clsx(
                "pt-0 pr-0 pb-0.5 text-black",
                i === 0 ? "border-r-2 border-b-2 border-l border-[#808080] pl-px" : "border-r border-b border-[#d4d4d4] pl-0.5",
              )}
            >
              {name}
            </td>
            <td className={clsx(TD, "pr-1 text-center", MONO)}>m2</td>
          </tr>
        ))}
      </tbody>
    </table>
  );
}

const QUERY_TABS = ["查询匹配清单", "查询匹配定额", "查询外部清单", "查询清单库", "查询定额库"];

function DefineDialog() {
  return (
    <section className="absolute top-[41px] right-[230px] bottom-[73px] left-[116px] flex flex-col bg-[#efefef] text-[#333]">
      <div className="flex h-[27px] shrink-0 items-center bg-[#2d80e0] pr-[9px] pl-2 text-white">
        <h1>定义</h1>
        <div className="ml-auto flex gap-[18px]">
          <button type="button" aria-label="最小化" className="h-[10px] w-[10px]">
            <svg viewBox="0 0 10 10"><path d="M1 8h8" stroke="#fff" strokeWidth="2" /></svg>
          </button>
          <button type="button" aria-label="最大化" className="h-[10px] w-[10px]">
            <svg viewBox="0 0 10 10"><path d="M1.500 2v6.500h7V2M1 2.500h8" fill="none" stroke="#fff" strokeWidth="1.500" /></svg>
          </button>
          <button type="button" aria-label="关闭" className="h-[10px] w-[10px]">
            <svg viewBox="0 0 10 10"><path d="M1.500 1.500l7 7M8.500 1.500l-7 7" stroke="#fff" strokeWidth="1.500" /></svg>
          </button>
        </div>
      </div>
      <div className="flex min-h-0 flex-1 flex-col border-x-2 border-b border-[#c4c7cd]">
        <div className="flex h-8 shrink-0 items-center gap-[10px] border-b-2 border-[#c4c7cd] pt-px pl-px">
          <Combo id="dialog-floor" label="楼层" value="第6层" className="h-[26px] w-[100px]" />
          <div className="-ml-1 h-[22px] w-px bg-[#c8c8c8]" />
          <ToolButton icon="bluecopy" label="层间复制" />
          <ToolButton icon="archive" label="存档" caret />
          <ToolButton icon="affix" label="添加前后缀" />
          <ToolButton icon="listred" label="删除未使用构件" />
          <div className="-mr-0.5 h-[22px] w-px bg-[#c8c8c8]" />
          <ToolButton icon="docCheck" label="检查做法" />
          <ToolButton icon="docGear" label="自动套方案维护" />
          <ToolButton icon="batch" label="批量自动套做法" />
        </div>
        <div className="flex min-h-0 flex-1 gap-[5px]">
          <div className="flex w-[143px] shrink-0 flex-col">
            <PanelHead title="导航树" />
            <div className="min-h-0 flex-1 overflow-hidden border border-[#aeb1b5] bg-white pt-px">
              <NavTree nodes={[...BASE, { label: "楼梯" }, ...FINISH]} active />
            </div>
          </div>

          <div className="flex w-[337px] shrink-0 flex-col">
            <PanelHead title="构件列表" />
            <div className="flex h-8 shrink-0 items-center gap-[10px] border-b-2 border-[#c4c7cd] pt-0.5 pl-1">
              <ToolButton icon="newdoc" label="新建" caret />
              <ToolButton icon="copy" label="复制" />
              <ToolButton icon="remove" label="删除" />
            </div>
            <div className="relative h-[19px] shrink-0">
              <input aria-label="搜索构件" placeholder="搜索构件..." className="block h-full w-full bg-white px-0.5 placeholder:text-[#777]" />
              <svg viewBox="0 0 12 12" className="absolute top-1 right-2 h-3 w-3" aria-hidden="true">
                <circle cx="5.500" cy="4.500" r="3.500" fill="none" stroke="#3d8fd8" strokeWidth="1.500" />
                <path d="M8 7.500l3 3" stroke="#3d8fd8" strokeWidth="2" />
              </svg>
            </div>
            <ComponentList />
            <div className="h-1 shrink-0" />
            <PanelHead title="属性列表" />
            <div className="min-h-0 flex-1 overflow-hidden border-t-2 border-r border-b border-l border-[#c4c7cd] bg-white">
              <PropertyTable />
            </div>
          </div>

          <div className="flex min-w-0 flex-1 flex-col">
            <PanelHead title="构件做法" />
            <div className="flex h-8 shrink-0 items-center gap-[10px] border-b-2 border-[#c4c7cd] pt-0.5 pl-1">
              <ToolButton icon="addlist" label="添加清单" />
              <ToolButton icon="addquota" label="添加定额" />
              <ToolButton icon="remove" label="删除" />
              <ToolButton icon="query" label="查询" caret />
              <ToolButton icon="feature" label="项目特征" />
              <ToolButton icon="fx" label="换算" caret />
              <ToolButton icon="brush" label="做法刷" />
              <ToolButton icon="docFind" label="做法查询" />
              <ToolButton icon="docPen" label="提取做法" />
              <ToolButton icon="current" label="当前构件自动套做法" />
              <label className="-ml-0.5 flex items-center gap-1 whitespace-nowrap text-black">
                <Tick label="参与自动套" checked />
                参与自动套
              </label>
            </div>
            <div className="flex h-[328px] shrink-0 flex-col justify-between border-b border-[#b4b8bd] bg-white">
              <MethodTable />
              <div className="mb-[3px] ml-[14px] h-2 w-[872px] rounded-full bg-[#ccc]" />
            </div>
            <div className="flex h-[30px] shrink-0 items-end gap-[3px] bg-white">
              {QUERY_TABS.map((t, i) => (
                <button
                  key={t}
                  type="button"
                  className={clsx(
                    "flex items-center gap-1.5 rounded-t-[3px] pt-px pr-[5px] whitespace-nowrap",
                    i === 0 ? "h-[25px] border border-b-0 border-[#c4c7cd] bg-white pl-[5px] text-[#2f83e6]" : "mb-px h-5 bg-[#dcdcdc] pl-1.5 text-[#555]",
                  )}
                >
                  {t}
                  <svg viewBox="0 0 9 9" className="h-[9px] w-[9px]" aria-hidden="true">
                    <path d="M1 1l7 7M8 1L1 8" stroke="#666" strokeWidth="1.200" />
                  </svg>
                </button>
              ))}
            </div>
            <div className="flex h-[23px] shrink-0 items-center gap-2 border-y-2 border-[#c4c7cd] pl-[3px] text-black">
              <Radio name="match" label="按构件类型过滤" checked className="gap-[3px]" />
              <Radio name="match" label="按构件属性过滤" className="gap-1" />
            </div>
            <div className="min-h-0 flex-1 border-b-2 border-l border-[#c4c7cd] bg-white">
              <MatchTable />
            </div>
            <div className="flex h-[10px] shrink-0 items-center justify-end pr-0.5">
              <svg viewBox="0 0 8 8" className="h-2 w-2" aria-hidden="true">
                <path d="M6 0h2v2H6zM3 3h2v2H3zM6 3h2v2H6zM0 6h2v2H0zM3 6h2v2H3zM6 6h2v2H6z" fill="#777" />
              </svg>
            </div>
          </div>
        </div>
      </div>
    </section>
  );
}

const STROKE =
  "M699 81L706 78 1155 78 1166 79 1233 88 1248 90 1272 95 1287 96 1298 98 1320 100 1332 100 1345 104 1365 106 1406 112 1429 113 1455 118 1496 125 1515 127 1528 130 1556 131 1586 136 1610 137 1623 140 1636 142 1664 148 1688 157 1722 167 1737 175 1751 178 1758 185 1757 195 1746 204 1735 208 1713 210 1655 210 1640 213 1638 216 1621 217 1580 223 1558 232 1545 235 1515 240 1507 241 1485 245 1446 249 1418 252 1401 257 1393 258 1090 258 1073 255 1050 252 789 252 762 247 753 243 743 241 726 235 713 233 680 217 629 197 612 191 583 178 559 164 538 153 531 151 516 141 508 137 494 126 485 117 481 109 543 109 547 111 701 111 714 112 720 114 759 115";

export default function App() {
  return (
    <main className="relative flex h-screen flex-col overflow-hidden bg-white font-['Noto_Sans','Noto_Sans_CJK_SC',sans-serif] text-[12px] leading-4">
      <TopBar />
      <Ribbon />
      <div className="flex h-[27px] shrink-0 items-center gap-[3px] border-b border-[#9b9fa3] bg-[#c9ccd0]">
        <Combo id="main-floor" label="当前楼层" value="第6层" className="h-[23px] w-[102px]" />
        <Combo id="main-type" label="构件类别" value="装修" className="h-[23px] w-[102px]" />
      </div>
      <div className="flex min-h-0 flex-1 gap-1">
        <aside className="flex w-[212px] shrink-0 flex-col border-r border-b border-l border-[#c4c7cd] bg-white">
          <div className="h-3 shrink-0 border-b border-[#c4c7cd] bg-[#d3d4da]" />
          <h2 className="flex h-[22px] shrink-0 items-center border-b border-[#c4c7cd] bg-[#efefef] pt-px pl-2 text-[#7a7a7a]">导航树</h2>
          <div className="flex h-[31px] shrink-0 items-center border-b border-[#c4c7cd] bg-[#efefef] pl-1.5">
            <svg viewBox="0 0 13 11" className="h-[11px] w-[13px]" aria-hidden="true">
              <path d="M0 7.500h6M3 4.500v6M7 3.500h6M10 .5v6" stroke={B} strokeWidth="2" />
            </svg>
          </div>
          <div className="min-h-0 flex-1 overflow-hidden pt-[3px]">
            <NavTree nodes={[...BASE, ...STAIRS, ...FINISH]} />
          </div>
        </aside>
        <aside className="flex w-[277px] shrink-0 border border-[#c4c7cd]">
          <div className="w-[22px] bg-[#efefef]" />
        </aside>
        <DrawingCanvas />
        <FloorPanel />
      </div>
      <StatusBar />
      <DefineDialog />
      <svg viewBox="0 0 1915 998" className="pointer-events-none absolute top-0 left-0 h-[998px] w-[1915px] max-w-none" aria-hidden="true">
        <path d={STROKE} fill="none" stroke="#ff2010" strokeWidth="3" strokeLinejoin="round" strokeLinecap="round" />
      </svg>
    </main>
  );
}
